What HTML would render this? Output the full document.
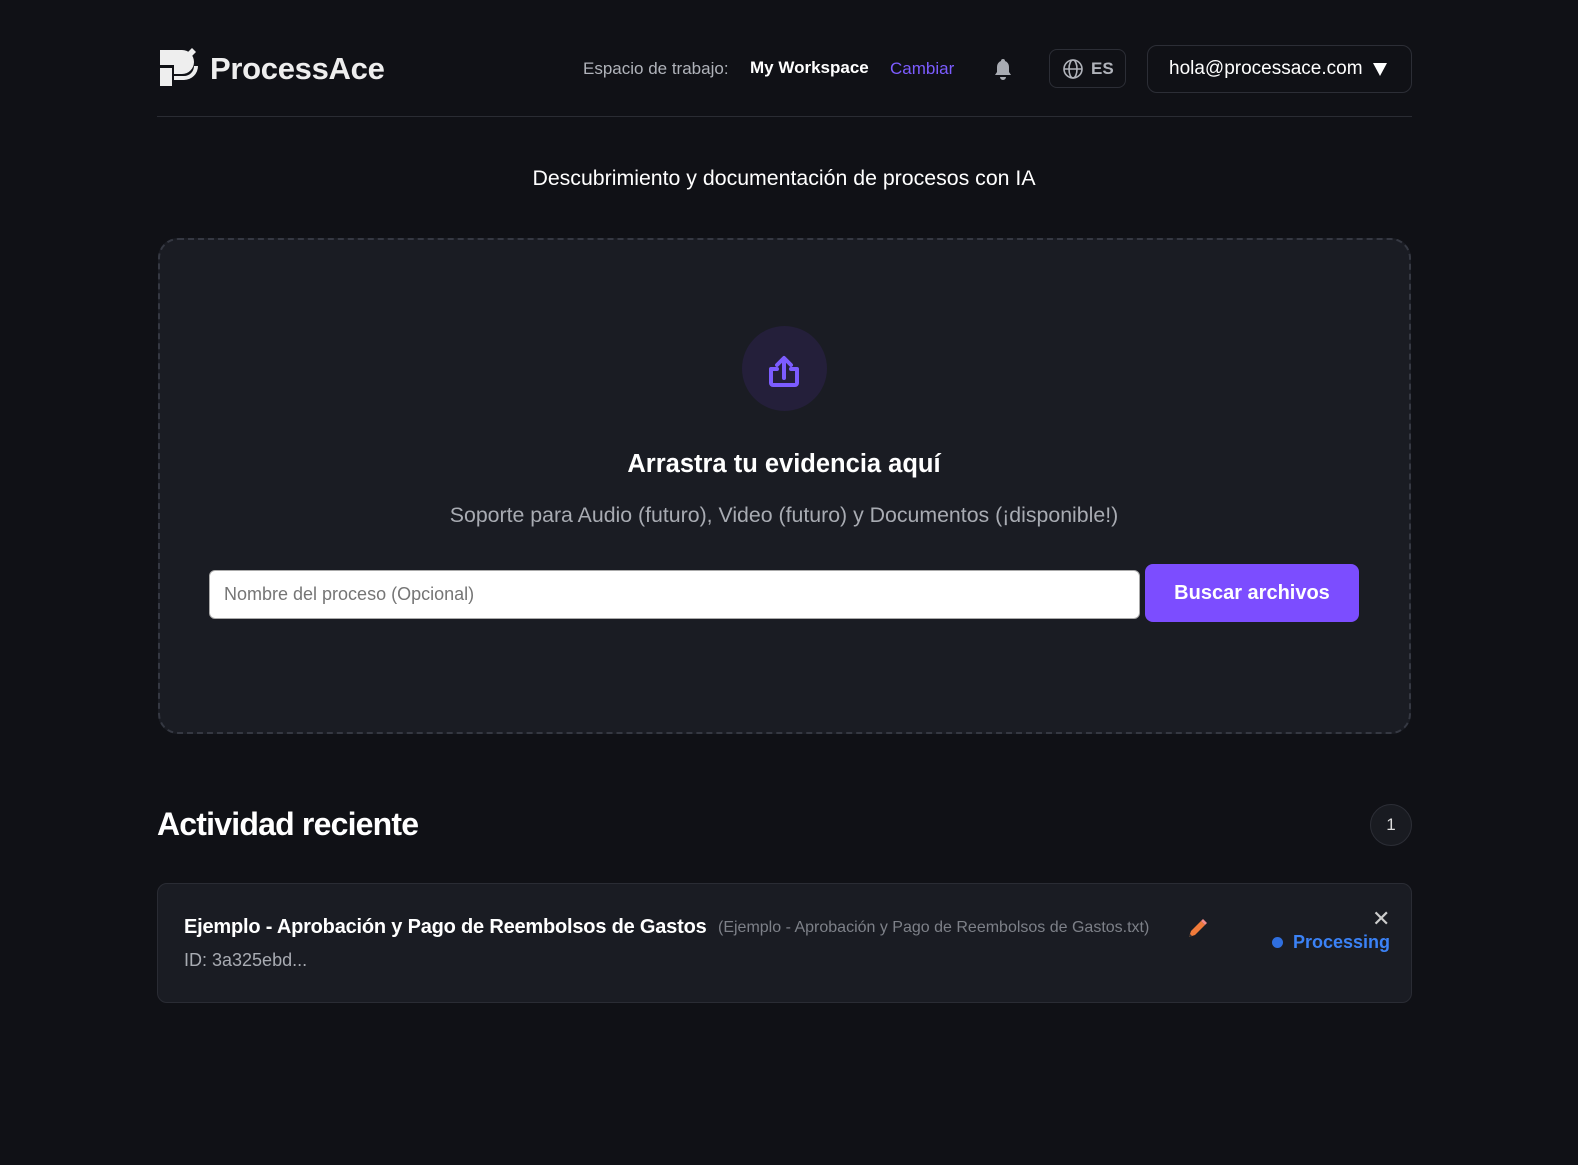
<!DOCTYPE html>
<html><head><meta charset="utf-8"><style>
*{box-sizing:border-box;margin:0;padding:0}
body{width:1578px;height:1165px;background:#101116;font-family:"Liberation Sans",sans-serif;color:#fff;position:relative;overflow:hidden}
.a{position:absolute;white-space:nowrap}
</style></head><body>
<svg class="a" style="left:158px;top:48px" width="42" height="42" viewBox="0 0 42 42">
<path d="M2 2h22a12 12 0 0 1 0 24h-8v-9H2z" fill="#eee"/>
<path d="M2 20h12v18H2z" fill="#eee"/>
<path d="M16 28h10a10 10 0 0 0 10-10h4a14 14 0 0 1-14 14H16z" fill="#eee"/>
<path d="M34 0l4 4-4 4-4-4z" fill="#eee"/>
</svg>
<div class="a" style="left:210px;top:51px;font-size:31px;font-weight:bold;color:#eee;letter-spacing:-0.3px">ProcessAce</div>
<div class="a" style="left:583px;top:59px;font-size:17px;color:#b0b3ba">Espacio de trabajo:</div>
<div class="a" style="left:750px;top:58px;font-size:17px;font-weight:bold;color:#fff">My Workspace</div>
<div class="a" style="left:890px;top:59px;font-size:17px;color:#7c5cff">Cambiar</div>
<svg class="a" style="left:993px;top:58px" width="20" height="22" viewBox="0 0 20 22"><path d="M10 1a2 2 0 0 1 2 2 6 6 0 0 1 4 6v5l2 3H2l2-3V9a6 6 0 0 1 4-6 2 2 0 0 1 2-2z M7 19h6a3 3 0 0 1-6 0z" fill="#a8abb2"/></svg>
<div class="a" style="left:1049px;top:49px;width:77px;height:39px;border:1px solid #2c2e36;border-radius:8px"></div>
<svg class="a" style="left:1062px;top:58px" width="22" height="22" viewBox="0 0 22 22" fill="none" stroke="#b0b3ba" stroke-width="1.6"><circle cx="11" cy="11" r="9"/><ellipse cx="11" cy="11" rx="4" ry="9"/><path d="M2 11h18"/></svg>
<div class="a" style="left:1091px;top:59px;font-size:17px;font-weight:bold;color:#b0b3ba">ES</div>
<div class="a" style="left:1147px;top:45px;width:265px;height:48px;border:1px solid #2c2e36;border-radius:10px"></div>
<div class="a" style="left:1169px;top:58px;font-size:19px;color:#fff">hola@processace.com</div>
<svg class="a" style="left:1372px;top:62px" width="16" height="14"><path d="M1 1h14L8 14z" fill="#fff"/></svg>
<div class="a" style="left:157px;top:116px;width:1255px;height:1px;background:#2a2c33"></div>
<div class="a" style="left:0;width:1568px;top:166px;text-align:center;font-size:21.3px;color:#fff">Descubrimiento y documentación de procesos con IA</div>
<div class="a" style="left:158px;top:238px;width:1253px;height:496px;border:2px dashed #353842;border-radius:20px;background:#1a1c23"></div>
<div class="a" style="left:742px;top:326px;width:85px;height:85px;border-radius:50%;background:#241f3a"></div>
<svg class="a" style="left:766px;top:354px" width="36" height="34" viewBox="0 0 36 34" fill="none" stroke="#7c5cff" stroke-width="4" stroke-linecap="round" stroke-linejoin="round"><path d="M11 15H5v14a2 2 0 0 0 2 2h22a2 2 0 0 0 2-2V15h-6"/><path d="M18 24V5M11 11l7-7 7 7"/></svg>
<div class="a" style="left:0;width:1568px;top:450px;text-align:center;font-size:25.5px;font-weight:bold;color:#fff">Arrastra tu evidencia aquí</div>
<div class="a" style="left:0;width:1568px;top:503px;text-align:center;font-size:21.3px;color:#a8abb2">Soporte para Audio (futuro), Video (futuro) y Documentos (¡disponible!)</div>
<div class="a" style="left:209px;top:570px;width:931px;height:49px;background:#fff;border-radius:6px;border:1px solid #aaa"></div>
<div class="a" style="left:224px;top:584px;font-size:18px;color:#757575">Nombre del proceso (Opcional)</div>
<div class="a" style="left:1145px;top:564px;width:214px;height:58px;background:#7c4dff;border-radius:8px;text-align:center;line-height:58px;font-size:20px;font-weight:bold;color:#fff">Buscar archivos</div>
<div class="a" style="left:157px;top:806px;font-size:32px;font-weight:bold;color:#fff;letter-spacing:-0.8px">Actividad reciente</div>
<div class="a" style="left:1370px;top:804px;width:42px;height:42px;border-radius:50%;border:1px solid #2c2e36;background:#191b21;text-align:center;line-height:40px;font-size:17px;color:#ddd">1</div>
<div class="a" style="left:157px;top:883px;width:1255px;height:120px;border:1px solid #2a2c34;border-radius:10px;background:#1a1c23"></div>
<div class="a" style="left:184px;top:916px;font-size:20px;font-weight:bold;color:#fff;letter-spacing:-0.2px">Ejemplo - Aprobación y Pago de Reembolsos de Gastos</div>
<div class="a" style="left:718px;top:919px;font-size:16px;color:#7d8088">(Ejemplo - Aprobación y Pago de Reembolsos de Gastos.txt)</div>
<svg class="a" style="left:1186px;top:918px" width="22" height="22" viewBox="0 0 22 22"><path d="M3 19l2-6L15 3l4 4L9 17z" fill="#f07a3a"/><path d="M15 3l2-2 4 4-2 2z" fill="#f38a8a"/><path d="M3 19l1-3 2 2z" fill="#333"/></svg>
<div class="a" style="left:184px;top:950px;font-size:18px;color:#a8abb2">ID: 3a325ebd...</div>
<div class="a" style="left:1372px;top:906px;font-size:22px;color:#ccc">✕</div>
<div class="a" style="left:1272px;top:937px;width:11px;height:11px;border-radius:50%;background:#2f6fe0"></div>
<div class="a" style="left:1293px;top:932px;font-size:18px;font-weight:bold;color:#3b82f6">Processing</div>
</body></html>
